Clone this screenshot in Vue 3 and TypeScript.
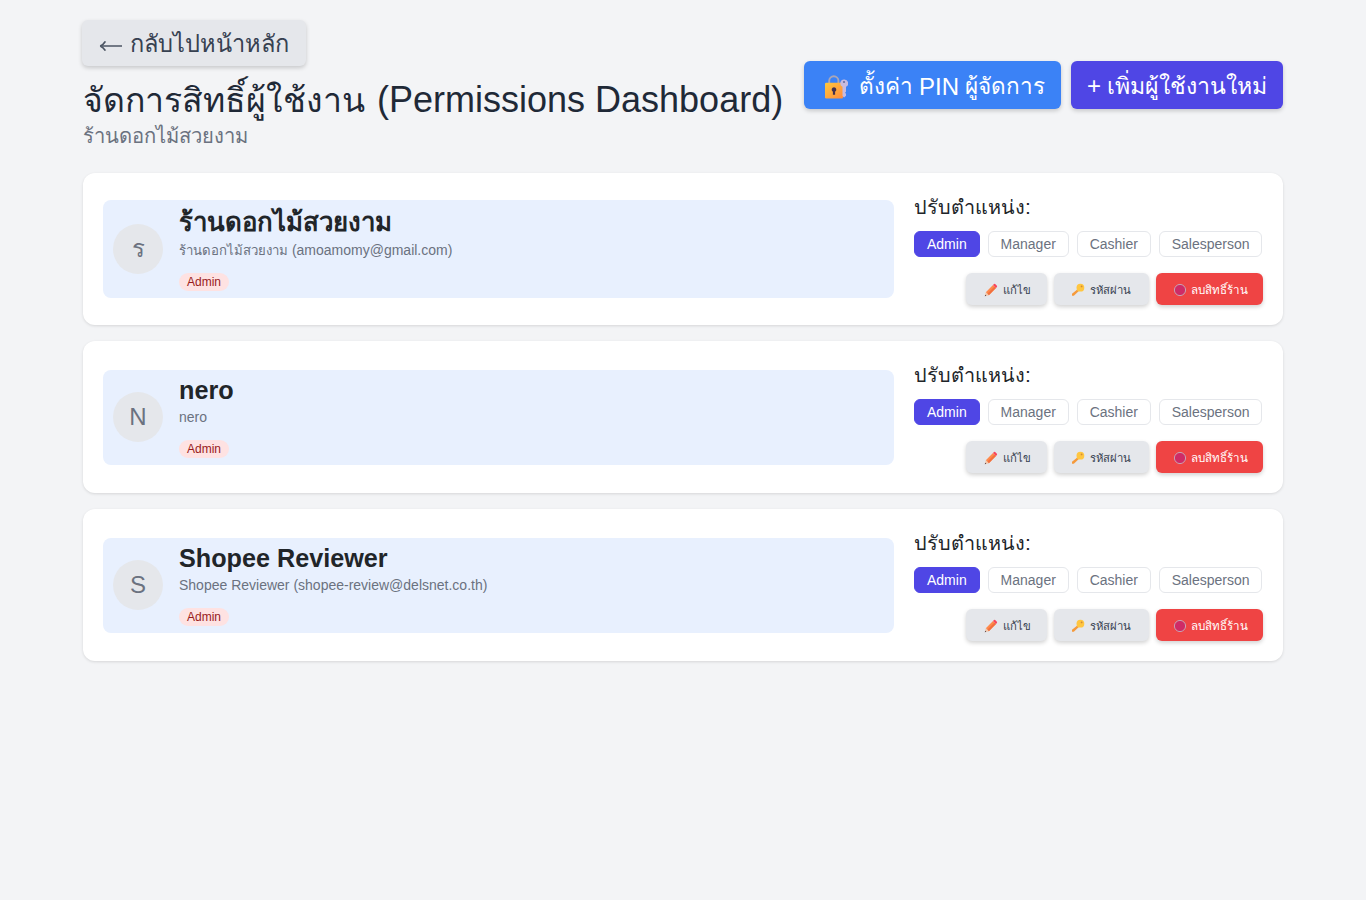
<script setup lang="ts">
interface User { name: string; detail: string; mail: string; initial: string; thai: boolean }
const users: User[] = [
  { name: 'ร้านดอกไม้สวยงาม', detail: 'ร้านดอกไม้สวยงาม', mail: '(amoamomy@gmail.com)', initial: 'ร', thai: true },
  { name: 'nero', detail: 'nero', mail: '', initial: 'N', thai: false },
  { name: 'Shopee Reviewer', detail: 'Shopee Reviewer', mail: '(shopee-review@delsnet.co.th)', initial: 'S', thai: false },
]
const roles: string[] = ['Admin', 'Manager', 'Cashier', 'Salesperson']
</script>

<template>
  <main class="page">
    <header class="header">
      <div class="heading">
        <button class="btn back">
          <svg class="arrow" viewBox="0 0 24 12"><path d="M2.5 6H23" /><path class="head" d="M1.2 6Q4.5 4.6 6.4 1.4M1.2 6Q4.5 7.4 6.4 10.6" /></svg>
          <span class="t">กลับไปหน้าหลัก</span>
        </button>
        <h1><span class="t">จัดการสิทธิ์ผู้ใช้งาน</span> <span>(Permissions Dashboard)</span></h1>
        <p class="shop"><span class="t">ร้านดอกไม้สวยงาม</span></p>
      </div>
      <div class="header-actions">
        <button class="btn pin">
          <svg class="lock" viewBox="0 0 24 24">
            <defs><linearGradient id="body" x1="0" y1="0" x2="1" y2="1"><stop offset="0" stop-color="#ffc83d" /><stop offset="1" stop-color="#ff8a3d" /></linearGradient></defs>
            <path d="M5.2 9V5.8a4.6 4.6 0 0 1 9.2 0V9" fill="none" stroke="#a9a6b8" stroke-width="1.9" />
            <rect x="1" y="7.8" width="18" height="15.6" rx="1.2" fill="url(#body)" />
            <path d="M10 12.2a2.4 2.4 0 0 0-1.1 4.5v3h2.2v-3A2.4 2.4 0 0 0 10 12.2z" fill="#44304d" />
            <path d="M20 4.4a3.9 3.9 0 0 0-1.5 7.4V21l1.6 1.4 1.9-1.6v-2l-1-1 1-1v-5A3.9 3.9 0 0 0 20 4.4z" fill="#c8bbdf" />
            <circle cx="20" cy="7" r="1.1" fill="#6b6e9d" />
          </svg>
          <span class="t">ตั้งค่า</span><span class="latin">PIN</span><span class="t">ผู้จัดการ</span>
        </button>
        <button class="btn add"><span>+</span><span class="t">เพิ่มผู้ใช้งานใหม่</span></button>
      </div>
    </header>

    <section class="list">
      <article v-for="u in users" :key="u.name" class="card">
        <div class="info" :class="{ tall: u.thai }">
          <div class="avatar">{{ u.initial }}</div>
          <div class="who">
            <h2>{{ u.name }}</h2>
            <p class="detail"><span :class="{ t: u.thai }">{{ u.detail }}</span> {{ u.mail }}</p>
            <span class="badge">Admin</span>
          </div>
        </div>
        <div class="controls">
          <div class="label"><span class="t">ปรับตำแหน่ง</span>:</div>
          <div class="roles">
            <button v-for="(r, i) in roles" :key="r" class="role" :class="{ active: i === 0 }">{{ r }}</button>
          </div>
          <div class="actions">
            <button class="btn small edit">
              <svg viewBox="0 0 14 14"><path d="M1.8 9.2L9 2l3 3-7.2 7.2z" fill="#ff8a4c" /><path d="M3.3 10.7L10.5 3.5 12 5l-7.2 7.2z" fill="#f2703f" /><path d="M9 2l1-.9q.6-.5 1.2 0l1.7 1.7q.5.6 0 1.2L12 5z" fill="#f8455c" /><path d="M1.8 9.2L.8 13.2l4-1z" fill="#f3c7a8" /><path d="M1.2 11.7L.8 13.2l1.5-.4z" fill="#4a3b45" /></svg>
              <span class="t">แก้ไข</span>
            </button>
            <button class="btn small pass">
              <svg viewBox="0 0 14 14"><path d="M7.2 5.8l1.5 1.5-5.9 5.5H1v-2z" fill="#f59a3c" /><circle cx="9.4" cy="4.7" r="3.9" fill="#ffc640" /><circle cx="10.6" cy="3.4" r=".9" fill="#d28a35" /></svg>
              <span class="t">รหัสผ่าน</span>
            </button>
            <button class="btn small remove">
              <svg viewBox="0 0 14 14"><circle cx="7" cy="7" r="5.6" fill="#cf2b66" stroke="#c9a0b0" stroke-width="1" /></svg>
              <span class="t">ลบสิทธิ์ร้าน</span>
            </button>
          </div>
        </div>
      </article>
    </section>
  </main>
</template>

<style>
body { background: #f3f4f6; }
</style>
<style scoped>
* { box-sizing: border-box; }
.page { width: 1200px; min-height: 900px; margin: 0 auto; padding-top: 20px; font-family: "Liberation Sans", Arial, sans-serif; color: #212529; }
.header { display: flex; justify-content: space-between; height: 153px; white-space: nowrap; }
h1, h2, p { margin: 0; font-weight: 400; }
button { font: inherit; cursor: pointer; }
.t { font-size: .943em; }
.btn { display: flex; align-items: center; border: 0; border-radius: 6px; box-shadow: 0 2px 4px rgba(0, 0, 0, .18); white-space: nowrap; }
.back { width: 224px; height: 46px; margin-left: -1px; padding: 2px 17px 0; gap: 7px; background: #e5e7eb; color: #374151; font-size: 24px; line-height: 40px; }
.back .t { font-size: 23.6px; }
.arrow { width: 24px; height: 12px; margin-top: 3px; fill: none; stroke: #4b5563; stroke-width: 1.5; }
.head { stroke-width: 1.8; }
h1 { margin-top: 10px; font-size: 36px; line-height: 48px; color: #1f2937; }
h1 .t { margin-right: 2px; font-size: 33.8px; }
.shop { margin-top: -1px; font-size: 21px; line-height: 26px; color: #6b7280; }
.shop .t { font-size: 20.2px; }
.header-actions { display: flex; gap: 10px; padding-top: 41px; }
.header-actions .btn { height: 48px; color: #fff; font-size: 24px; line-height: 48px; }
.pin { width: 257px; padding: 3px 0 0 20px; background: #3b82f6; }
.pin .t { font-size: 22.5px; }
.lock { width: 24px; height: 24px; margin-right: 11px; }
.latin { margin: 0 6px; }
.add { width: 212px; padding: 1px 0 0 16px; gap: 6px; background: #4f46e5; }
.add .t { font-size: 23.1px; }
.list { display: flex; flex-direction: column; gap: 16px; }
.card { display: flex; align-items: center; justify-content: space-between; height: 152px; padding: 0 20px; background: #fff; border-radius: 12px; box-shadow: 0 1px 3px rgba(0, 0, 0, .12); }
.info { display: flex; align-items: center; gap: 16px; width: 791px; height: 95px; margin-top: 1px; padding: 0 10px 1px; background: #e8f0fe; border-radius: 8px; }
.info.tall { height: 98px; margin-top: 0; padding-bottom: 0; }
.avatar { width: 50px; height: 50px; border-radius: 50%; background: #e5e7eb; color: #6b7280; font-size: 24px; line-height: 50px; text-align: center; }
.who { white-space: nowrap; }
h2 { height: 31px; font-size: 25.2px; font-weight: 700; line-height: 28px; color: #212529; }
.tall h2 { height: 33px; font-size: 25.8px; line-height: 30px; }
.detail { height: 17px; margin-top: 2px; font-size: 14px; line-height: 17px; color: #6b7280; }
.badge { display: block; width: 50px; height: 18px; margin-top: 14px; border-radius: 9px; background: #fee2e2; color: #991b1b; font-size: 12px; line-height: 18px; text-align: center; }
.controls { width: 349px; height: 112px; }
.label { height: 30px; font-size: 21px; line-height: 27px; white-space: nowrap; }
.roles { display: flex; gap: 8px; margin-top: 8px; }
.role { height: 26px; padding: 0 11.9px; border: 1px solid #e5e7eb; border-radius: 6px; background: #fff; color: #6b7280; font-size: 14px; line-height: 24px; }
.role.active { padding: 0 12px; background: #4f46e5; border-color: #4f46e5; color: #fff; }
.actions { display: flex; justify-content: flex-end; gap: 7px; margin-top: 16px; }
.small { height: 32px; padding: 1px 0 0 17px; gap: 5px; background: #e5e7eb; color: #374151; font-size: 12px; line-height: 32px; }
.small svg { width: 14px; height: 14px; }
.edit { width: 81px; padding-left: 18px; }
.pass { width: 95px; }
.remove { width: 107px; gap: 4px; background: #ef4444; color: #fff; }
.remove .t { font-size: 11.6px; }
</style>
